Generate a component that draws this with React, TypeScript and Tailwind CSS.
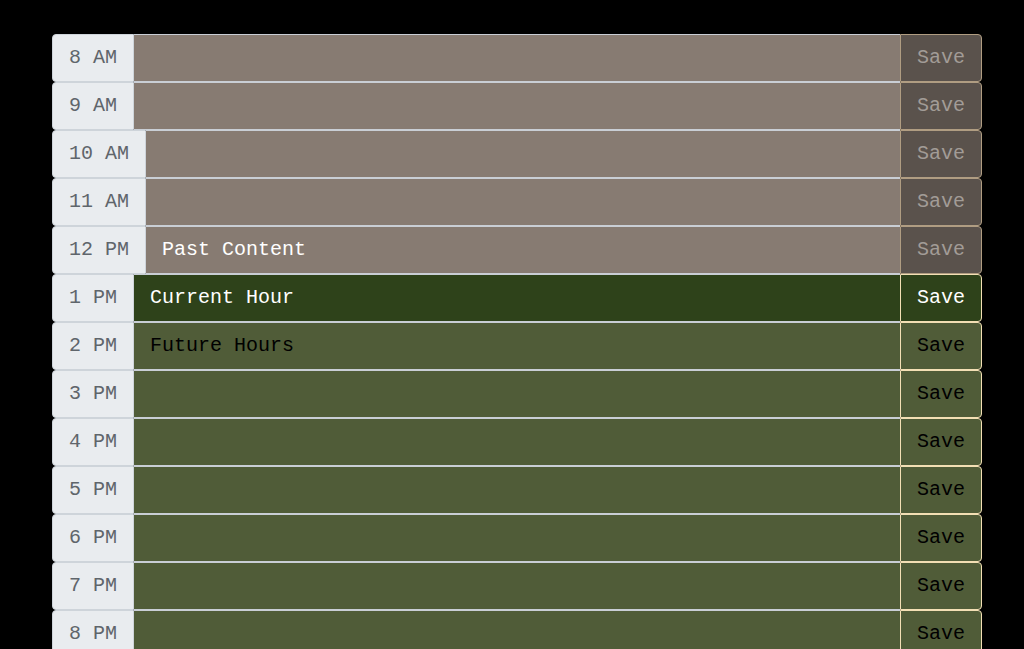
import React from 'react';

type Tense = 'past' | 'present' | 'future';

interface HourRow {
  label: string;
  text: string;
  tense: Tense;
}

const rows: HourRow[] = [
  { label: '8 AM', text: '', tense: 'past' },
  { label: '9 AM', text: '', tense: 'past' },
  { label: '10 AM', text: '', tense: 'past' },
  { label: '11 AM', text: '', tense: 'past' },
  { label: '12 PM', text: 'Past Content', tense: 'past' },
  { label: '1 PM', text: 'Current Hour', tense: 'present' },
  { label: '2 PM', text: 'Future Hours', tense: 'future' },
  { label: '3 PM', text: '', tense: 'future' },
  { label: '4 PM', text: '', tense: 'future' },
  { label: '5 PM', text: '', tense: 'future' },
  { label: '6 PM', text: '', tense: 'future' },
  { label: '7 PM', text: '', tense: 'future' },
  { label: '8 PM', text: '', tense: 'future' },
];

const areaStyles: Record<Tense, string> = {
  past: 'bg-[#877b72] text-white',
  present: 'bg-[#2e421a] text-white',
  future: 'bg-[#505c38] text-black',
};

const buttonStyles: Record<Tense, string> = {
  past: 'bg-[#5a524c] text-[#a29c97] border-[#b09d82]',
  present: 'bg-[#2e421a] text-white border-[#f3dfb4]',
  future: 'bg-[#505c38] text-black border-[#f3dfb4]',
};

function TimeBlock({ row }: { row: HourRow }) {
  return (
    <div className="flex h-12 w-[930px]">
      {/* hour label */}
      <div className="flex items-center rounded-l-[4px] border border-[#ced4da] bg-[#e9ecef] px-4 text-[#5f656b]">
        {row.label}
      </div>
      {/* event text */}
      <div
        className={`flex flex-1 items-center border-y border-[#c9ced5] px-4 ${areaStyles[row.tense]}`}
      >
        {row.text}
      </div>
      <button
        className={`w-[82px] rounded-r-[4px] border ${buttonStyles[row.tense]}`}
      >
        Save
      </button>
    </div>
  );
}

export default function App() {
  return (
    <div
      className="h-[649px] overflow-hidden bg-black pl-[52px] pt-[34px] text-[20px] leading-6"
      style={{ fontFamily: '"Courier New", "Nimbus Mono PS", Courier, "Liberation Mono", monospace' }}
    >
      <div className="flex flex-col">
        {rows.map((row) => (
          <TimeBlock key={row.label} row={row} />
        ))}
      </div>
    </div>
  );
}
